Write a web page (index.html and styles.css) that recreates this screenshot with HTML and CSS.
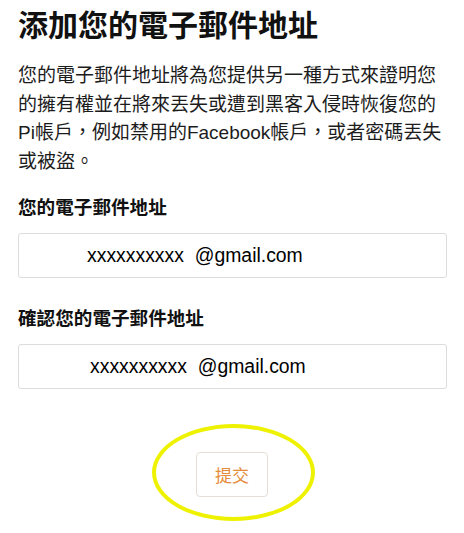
FILE: index.html
```html
<!DOCTYPE html>
<html lang="zh-Hant">
<head>
<meta charset="utf-8">
<title>添加您的電子郵件地址</title>
<link rel="stylesheet" href="styles.css">
</head>
<body>
<main class="page">
  <h1 class="title">添加您的電子郵件地址</h1>
  <p class="intro">您的電子郵件地址將為您提供另一種方式來證明您的擁有權並在將來丟失或遭到黑客入侵時恢復您的Pi帳戶，例如禁用的Facebook帳戶，或者密碼丟失或被盜。</p>
  <form class="form">
    <label class="field-label" for="email1">您的電子郵件地址</label>
    <input class="field" id="email1" type="text" value="xxxxxxxxxx  @gmail.com" readonly>
    <label class="field-label second" for="email2">確認您的電子郵件地址</label>
    <input class="field field-b" id="email2" type="text" value="xxxxxxxxxx  @gmail.com" readonly>
    <div class="actions">
      <div class="btn-wrap">
        <button class="submit" type="button">提交</button>
        <span class="highlight" aria-hidden="true"></span>
      </div>
    </div>
  </form>
</main>
</body>
</html>
```
FILE: styles.css
```css
html, body {
  margin: 0;
  padding: 0;
  background: #ffffff;
}
body {
  font-family: "Liberation Sans", "Noto Sans CJK TC", sans-serif;
  color: #111111;
}
.page {
  padding: 6px 18px 36px 18px;
  min-height: 533px;
  box-sizing: border-box;
}
.title {
  margin: 0;
  font-size: 30px;
  line-height: 40px;
  font-weight: 700;
  color: #111111;
}
.intro {
  margin: 16px 0 0 0;
  font-size: 19px;
  line-height: 28.6px;
  color: #1c1c1c;
}
.form {
  display: flex;
  flex-direction: column;
}
.field-label {
  display: block;
  margin-top: 20px;
  font-size: 18.6px;
  line-height: 24px;
  font-weight: 700;
  color: #111111;
}
.field-label.second {
  margin-top: 29px;
}
.field {
  box-sizing: border-box;
  margin-top: 13px;
  width: 429px;
  height: 45px;
  padding: 0 0 0 68px;
  border: 1px solid #dcdcdc;
  border-radius: 3px;
  background: #ffffff;
  font-family: "Liberation Sans", sans-serif;
  font-size: 19.4px;
  color: #000000;
  outline: none;
}
.field-b {
  padding-left: 71px;
}
.actions {
  display: flex;
  justify-content: center;
  margin-top: 63px;
}
.btn-wrap {
  position: relative;
}
.submit {
  box-sizing: border-box;
  display: block;
  width: 72px;
  height: 45px;
  border: 1px solid #e6ded6;
  border-radius: 4px;
  background: #ffffff;
  color: #e58c3a;
  font-family: "Noto Sans CJK TC", sans-serif;
  font-size: 17px;
  padding: 0;
}
.highlight {
  position: absolute;
  left: -44px;
  top: -28px;
  width: 163px;
  height: 97px;
  box-sizing: border-box;
  border: 4px solid #eef200;
  border-radius: 50%;
  pointer-events: none;
}
```
